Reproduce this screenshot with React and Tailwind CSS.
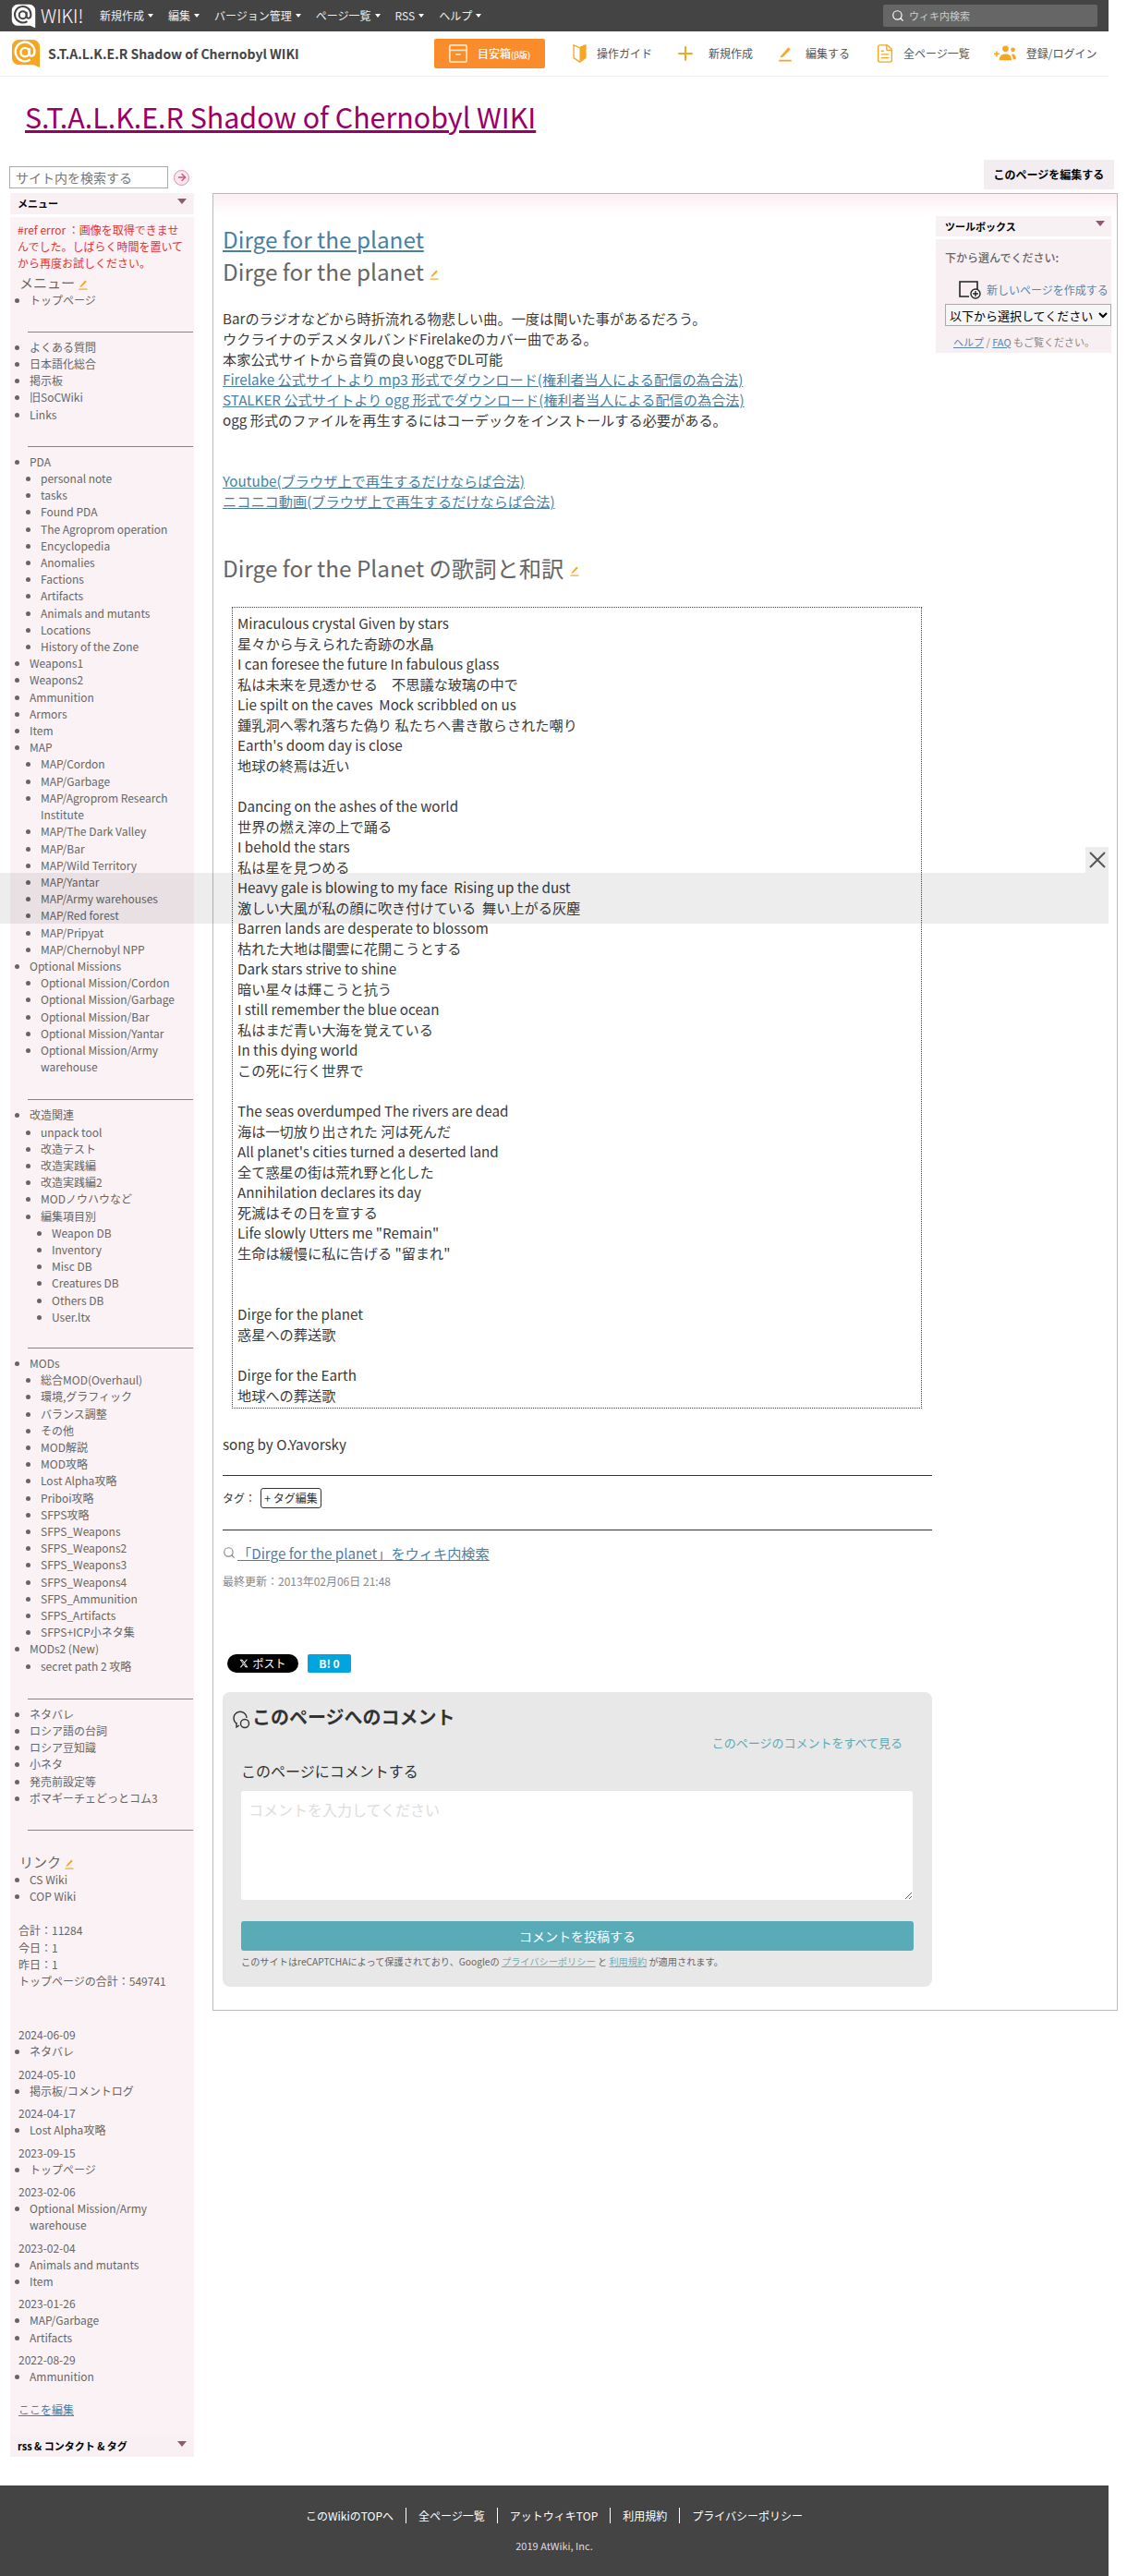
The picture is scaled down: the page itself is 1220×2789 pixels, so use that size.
import { Search, Plus, FileText, ArrowRight } from 'lucide-react';

const font = 'font-["Noto_Sans_CJK_JP","Noto_Sans",sans-serif]';

// ── Icons ─────────────────────────────────────────────────────────────────────
function AtLogo({ bg, fg, className }) {
  return (
    <svg viewBox="0 0 34 34" className={className}>
      <path d="M9 1h16a8 8 0 0 1 8 8v24l-7-3H9a8 8 0 0 1-8-8V9a8 8 0 0 1 8-8z" fill={bg} />
      <circle cx="16" cy="15.5" r="5" fill="none" stroke={fg} strokeWidth="2.5" />
      <path d="M21 11v6c0 4 6 4 6-2a11 11 0 1 0-5 9" fill="none" stroke={fg} strokeWidth="2.5" />
    </svg>
  );
}

function Pencil({ className = 'w-3 h-3' }) {
  return (
    <svg viewBox="0 0 16 16" className={`inline-block ${className}`}>
      <path d="M4 10 11 2l2 2-7 7-3 1z" fill="#f5a623" />
      <rect x="2" y="14" width="12" height="1.6" fill="#f5a623" />
    </svg>
  );
}

function Triangle({ className = '' }) {
  return <span className={`block w-0 h-0 border-x-[5px] border-x-transparent border-t-[6px] border-t-[#8c5a73] ${className}`} />;
}

// ── Sidebar ───────────────────────────────────────────────────────────────────
function Item({ children, sub }) {
  return (
    <li className="list-disc">
      <span>{children}</span>
      {sub && <List items={sub} nested />}
    </li>
  );
}

function List({ items, nested }) {
  return (
    <ul className={nested ? 'pl-[12px]' : 'pl-[21px]'}>
      {items.map((it) =>
        Array.isArray(it) ? (
          <Item key={it[0]} sub={it[1]}>{it[0]}</Item>
        ) : (
          <Item key={it}>{it}</Item>
        )
      )}
    </ul>
  );
}

function SideRule({ className }) {
  return <hr className={`w-[179px] ml-[19px] border-t border-[#8a8085] ${className}`} />;
}

const pda = [
  ['PDA', ['personal note', 'tasks', 'Found PDA', 'The Agroprom operation', 'Encyclopedia', 'Anomalies', 'Factions', 'Artifacts', 'Animals and mutants', 'Locations', 'History of the Zone']],
  'Weapons1', 'Weapons2', 'Ammunition', 'Armors', 'Item',
  ['MAP', ['MAP/Cordon', 'MAP/Garbage', 'MAP/Agroprom Research Institute', 'MAP/The Dark Valley', 'MAP/Bar', 'MAP/Wild Territory', 'MAP/Yantar', 'MAP/Army warehouses', 'MAP/Red forest', 'MAP/Pripyat', 'MAP/Chernobyl NPP']],
  ['Optional Missions', ['Optional Mission/Cordon', 'Optional Mission/Garbage', 'Optional Mission/Bar', 'Optional Mission/Yantar', 'Optional Mission/Army warehouse']],
];

const mods = [
  ['改造関連', ['unpack tool', '改造テスト', '改造実践編', '改造実践編2', 'MODノウハウなど', ['編集項目別', ['Weapon DB', 'Inventory', 'Misc DB', 'Creatures DB', 'Others DB', 'User.ltx']]]],
];

const mods2 = [
  ['MODs', ['総合MOD(Overhaul)', '環境,グラフィック', 'バランス調整', 'その他', 'MOD解説', 'MOD攻略', 'Lost Alpha攻略', 'Priboi攻略', 'SFPS攻略', 'SFPS_Weapons', 'SFPS_Weapons2', 'SFPS_Weapons3', 'SFPS_Weapons4', 'SFPS_Ammunition', 'SFPS_Artifacts', 'SFPS+ICP小ネタ集']],
  ['MODs2 (New)', ['secret path 2 攻略']],
];

const recent = [
  ['2024-06-09', ['ネタバレ']],
  ['2024-05-10', ['掲示板/コメントログ']],
  ['2024-04-17', ['Lost Alpha攻略']],
  ['2023-09-15', ['トップページ']],
  ['2023-02-06', ['Optional Mission/Army warehouse']],
  ['2023-02-04', ['Animals and mutants', 'Item']],
  ['2023-01-26', ['MAP/Garbage', 'Artifacts']],
  ['2022-08-29', ['Ammunition']],
];

function Sidebar() {
  return (
    <aside className="w-[199px] ml-[11px] text-[12px] leading-[18.2px] text-[#666]">
      <div className="flex items-center gap-[6px] h-[24px] -ml-px mb-[5px]">
        <input
          readOnly
          placeholder="サイト内を検索する"
          className="w-[172px] h-[24px] border border-[#aaa] px-[6px] text-[14px] placeholder:text-[#777]"
        />
        <div className="w-[17px] h-[17px] rounded-full border border-[#e58aa5] bg-[#fbe9ef] flex items-center justify-center">
          <ArrowRight size={12} strokeWidth={3} className="text-[#d9537f]" />
        </div>
      </div>
      <div className="h-[23px] bg-[#f9f0f3] flex items-center justify-between px-[8px] text-[11px] font-bold text-black">
        <span>メニュー</span>
        <Triangle className="-mt-[6px]" />
      </div>
      <div className="mt-[3px] bg-[#fbf2f5] pt-[5px] h-[2402px]">
        <p className="px-[8px] text-[#e53333]">#ref error ：画像を取得できませんでした。しばらく時間を置いてから再度お試しください。</p>
        <p className="pl-[10px] mt-[1px] text-[15px] leading-[20px]">メニュー <Pencil /></p>
        <List items={['トップページ']} />
        <SideRule className="mt-[25px] mb-[7px]" />
        <List items={['よくある質問', '日本語化総合', '掲示板', '旧SoCWiki', 'Links']} />
        <SideRule className="mt-[25px] mb-[7px]" />
        <List items={pda} />
        <SideRule className="mt-[26px] mb-[7px]" />
        <List items={mods} />
        <SideRule className="mt-[24px] mb-[7px]" />
        <List items={mods2} />
        <SideRule className="mt-[26px] mb-[7px]" />
        <List items={['ネタバレ', 'ロシア語の台詞', 'ロシア豆知識', '小ネタ', '発売前設定等', 'ポマギーチェどっとコム3']} />
        <SideRule className="mt-[25px] mb-[24px]" />
        <p className="pl-[10px] text-[15px] leading-[20px]">リンク <Pencil /></p>
        <List items={['CS Wiki', 'COP Wiki']} />
        <div className="pl-[9px] mt-[19px]">
          <p>合計：11284</p>
          <p>今日：1</p>
          <p>昨日：1</p>
          <p>トップページの合計：549741</p>
        </div>
        <div className="mt-[40px]">
          {recent.map(([date, pages]) => (
            <div key={date} className="mb-[6px]">
              <p className="pl-[9px]">{date}</p>
              <List items={pages} />
            </div>
          ))}
        </div>
        <p className="pl-[9px] mt-[18px] text-[#4a7fa5] underline">ここを編集</p>
      </div>
      <div className="h-[23px] bg-[#f9f0f3] flex items-center justify-between px-[8px] text-[11px] font-bold text-black">
        <span>rss &amp; コンタクト &amp; タグ</span>
        <Triangle className="-mt-[6px]" />
      </div>
    </aside>
  );
}

// ── Toolbox ───────────────────────────────────────────────────────────────────
function Toolbox() {
  return (
    <div className="absolute right-[6px] top-[24px] w-[190px] text-[12px] text-[#666]">
      <div className="h-[22px] bg-[#f8f1f4] flex items-center justify-between pl-[10px] pr-[7px] text-[11px] font-bold text-black">
        <span>ツールボックス</span>
        <Triangle className="-mt-[6px]" />
      </div>
      <div className="mt-[3px] h-[123px] bg-[#f8eff3] pt-[11px] pl-[10px]">
        <p className="font-medium leading-[18px]">下から選んでください:</p>
        <p className="mt-[16px] ml-[15px] h-[20px] flex items-center gap-[6px] text-[#5c86a8] whitespace-nowrap">
          <svg viewBox="0 0 24 20" className="w-[24px] h-[20px] shrink-0">
            <path d="M20 11V1H1v16h10" fill="none" stroke="#222" strokeWidth="1.6" />
            <circle cx="18" cy="14" r="5" fill="#fff" stroke="#222" strokeWidth="1.4" />
            <path d="M18 11v6M15 14h6" stroke="#222" strokeWidth="1.4" />
          </svg>
          新しいページを作成する
        </p>
        <select className="block mt-[5px] w-[180px] h-[24px] border border-[#aaa] bg-[#f6f6f6] text-[13px] text-black">
          <option>以下から選択してください</option>
        </select>
        <p className="mt-[8px] ml-[9px] text-[11px] leading-[18px] text-[#888]">
          <span className="text-[#5c86a8] underline">ヘルプ</span> / <span className="text-[#5c86a8] underline">FAQ</span> もご覧ください。
        </p>
      </div>
    </div>
  );
}

// ── Main ──────────────────────────────────────────────────────────────────────
const lyrics = `Miraculous crystal Given by stars
星々から与えられた奇跡の水晶
I can foresee the future In fabulous glass
私は未来を見透かせる　不思議な玻璃の中で
Lie spilt on the caves  Mock scribbled on us
鍾乳洞へ零れ落ちた偽り 私たちへ書き散らされた嘲り
Earth's doom day is close
地球の終焉は近い

Dancing on the ashes of the world
世界の燃え滓の上で踊る
I behold the stars
私は星を見つめる
Heavy gale is blowing to my face  Rising up the dust
激しい大風が私の顔に吹き付けている  舞い上がる灰塵
Barren lands are desperate to blossom
枯れた大地は闇雲に花開こうとする
Dark stars strive to shine
暗い星々は輝こうと抗う
I still remember the blue ocean
私はまだ青い大海を覚えている
In this dying world
この死に行く世界で

The seas overdumped The rivers are dead
海は一切放り出された 河は死んだ
All planet's cities turned a deserted land
全て惑星の街は荒れ野と化した
Annihilation declares its day
死滅はその日を宣する
Life slowly Utters me "Remain"
生命は緩慢に私に告げる "留まれ"


Dirge for the planet
惑星への葬送歌

Dirge for the Earth
地球への葬送歌`.split('\n');

function Article() {
  return (
    <div className="text-[15.2px] leading-[22px] text-[#3a3a3a]">
      <p className="pt-[31px] text-[24.32px] leading-[35px] text-[#4a7fa5] underline">Dirge for the planet</p>
      <h2 className="text-[24.32px] leading-[35px] text-[#666]">Dirge for the planet <Pencil /></h2>
      <div className="mt-[22px]">
        <p>Barのラジオなどから時折流れる物悲しい曲。一度は聞いた事があるだろう。</p>
        <p>ウクライナのデスメタルバンドFirelakeのカバー曲である。</p>
        <p>本家公式サイトから音質の良いoggでDL可能</p>
        <p className="text-[#4a7fa5] underline">Firelake 公式サイトより mp3 形式でダウンロード(権利者当人による配信の為合法)</p>
        <p className="text-[#4a7fa5] underline">STALKER 公式サイトより ogg 形式でダウンロード(権利者当人による配信の為合法)</p>
        <p>ogg 形式のファイルを再生するにはコーデックをインストールする必要がある。</p>
      </div>
      <div className="mt-[44px] text-[#4a7fa5] underline">
        <p>Youtube(ブラウザ上で再生するだけならば合法)</p>
        <p>ニコニコ動画(ブラウザ上で再生するだけならば合法)</p>
      </div>
      <h3 className="mt-[44px] text-[24.32px] leading-[36px] text-[#666]">Dirge for the Planet の歌詞と和訳 <Pencil /></h3>
      <div className="mt-[24px] ml-[10px] w-[747px] h-[868px] border border-dotted border-[#5a3a3a] px-[5px] py-[5px] overflow-hidden">
        {lyrics.map((line, i) => (
          <p key={i} className="whitespace-pre h-[22px]">{line}</p>
        ))}
      </div>
      <p className="mt-[27px]">song by O.Yavorsky</p>
      <hr className="mt-[23px] w-[768px] border-t border-[#333]" />
      <div className="mt-[13px] flex items-center text-[12px] h-[22px]">
        タグ：
        <span className="ml-[5px] h-[22px] w-[66px] border border-[#333] rounded-[3px] flex items-center justify-center text-[#333]">+ タグ編集</span>
      </div>
      <hr className="mt-[23px] w-[768px] border-t border-[#333]" />
      <p className="mt-[13px] flex items-center">
        <Search size={14} className="text-[#888] mr-[2px]" />
        <span className="text-[#4a7fa5] underline">「Dirge for the planet」をウィキ内検索</span>
      </p>
      <p className="mt-[9px] text-[12px] text-[#888]">最終更新：2013年02月06日 21:48</p>
      <div className="mt-[68px] ml-[5px] flex gap-[10px]">
        <span className="w-[77px] h-[20px] rounded-full bg-black text-white text-[12px] leading-[20px] flex items-center justify-center gap-1">
          <svg viewBox="0 0 24 24" className="w-[10px] h-[10px]"><path d="M18.2 2h3.3l-7.2 8.3L22.8 22h-6.6l-5.2-6.8L5 22H1.700l7.700-8.800L1.300 2h6.800l4.700 6.200zM17 20h1.800L7 3.900H5z" fill="#fff" /></svg>
          ポスト
        </span>
        <span className="w-[47px] h-[20px] rounded-[2px] bg-[#00a4de] text-white text-[12px] font-bold flex items-center justify-center">B! 0</span>
      </div>
      <section className="mt-[21px] w-[768px] h-[319px] rounded-[8px] bg-[#e8e8e8] px-[20px]">
        <h4 className="pt-[13px] -ml-[9px] flex items-center gap-px text-[20px] leading-[28px] font-bold text-[#333]">
          <svg viewBox="0 0 20 20" className="w-[20px] h-[20px] mt-[6px]">
            <path d="M4 14a7 7 0 1 1 11-6" fill="none" stroke="#333" strokeWidth="1.4" />
            <path d="M4 13v5l3-2" fill="none" stroke="#333" strokeWidth="1.4" />
            <circle cx="13" cy="14" r="4.500" fill="none" stroke="#333" strokeWidth="1.400" />
          </svg>
          このページへのコメント
        </h4>
        <p className="mt-[3px] pr-[12px] text-right text-[13px] leading-[22px] text-[#5aabb8]">このページのコメントをすべて見る</p>
        <p className="mt-[7px] text-[16px] leading-[24px] text-[#333]">このページにコメントする</p>
        <textarea
          readOnly
          placeholder="コメントを入力してください"
          className="block mt-[10px] w-[727px] h-[118px] rounded-[3px] bg-white px-[8px] py-[8px] text-[16px] leading-[24px] placeholder:text-[#ddd]"
        />
        <div className="mt-[23px] h-[32px] rounded-[3px] bg-[#5aabb8] text-white text-[14px] leading-[32px] text-center">コメントを投稿する</div>
        <p className="mt-[2px] text-[10.2px] leading-[20px] text-[#666]">
          このサイトはreCAPTCHAによって保護されており、Googleの <span className="text-[#6fb0b8] underline">プライバシーポリシー</span> と <span className="text-[#6fb0b8] underline">利用規約</span> が適用されます。
        </p>
      </section>
    </div>
  );
}

// ── Header ────────────────────────────────────────────────────────────────────
const topMenu = ['新規作成', '編集', 'バージョン管理', 'ページ一覧', 'RSS', 'ヘルプ'];

function TopBar() {
  return (
    <div className="h-[34px] bg-[#444] flex items-center justify-between pl-[12px] pr-[12px] text-white">
      <div className="flex items-center">
        <AtLogo bg="#fff" fg="#444" className="w-[27px] h-[27px]" />
        <span className="ml-[5px] w-[44px] text-[20px] leading-none font-light whitespace-nowrap">WIKI!</span>
        <div className="ml-[20px] flex gap-[16px] text-[12px] text-[#eee]">
          {topMenu.map((m) => (
            <span key={m} className="flex items-center gap-[4px]">
              {m}
              <span className="w-0 h-0 border-x-[3px] border-x-transparent border-t-[4px] border-t-white" />
            </span>
          ))}
        </div>
      </div>
      <div className="w-[232px] h-[24px] rounded-[2px] bg-[#666] flex items-center pl-[9px] gap-[5px] text-[11px] text-[#ccc]">
        <Search size={14} className="text-white" />
        ウィキ内検索
      </div>
    </div>
  );
}

function SubBar() {
  return (
    <div className="h-[49px] border-b border-[#eee] flex items-center pl-[12px] text-[#555]">
      <AtLogo bg="#f5a623" fg="#fff" className="w-[32px] h-[32px]" />
      <b className="ml-[8px] text-[14px] w-[418px] whitespace-nowrap text-[#444]">S.T.A.L.K.E.R Shadow of Chernobyl WIKI</b>
      <div className="w-[120px] h-[32px] -mt-[1px] rounded-[2px] bg-[#fb8c2b] flex items-center pl-[15px] gap-[10px] text-white text-[12px] font-medium">
        <svg viewBox="0 0 24 24" className="w-[22px] h-[22px]" fill="none" stroke="#ffe2b8" strokeWidth="2">
          <rect x="2" y="2" width="20" height="20" rx="2" />
          <path d="M2 8h20M9 13h6" />
        </svg>
        <span>目安箱<span className="text-[9px]">(β版)</span></span>
      </div>
      <div className="ml-[30px] flex items-center text-[12px] whitespace-nowrap">
        <svg viewBox="0 0 16 24" className="w-[15px] h-[22px]"><path d="M1 2l7 3 7-3v15l-7 5-7-5z" fill="#fff" stroke="#f5a623" strokeWidth="1.500" /><path d="M8 5l7-3v15l-7 5z" fill="#f5a623" /></svg>
        <span className="ml-[11px]">操作ガイド</span>
        <Plus size={24} className="ml-[24px] text-[#f5a623]" strokeWidth={2} />
        <span className="ml-[13px]">新規作成</span>
        <Pencil className="w-[18px] h-[18px] ml-[26px]" />
        <span className="ml-[13px]">編集する</span>
        <FileText size={22} className="ml-[27px] text-[#f5a623]" strokeWidth={1.5} />
        <span className="ml-[9px]">全ページ一覧</span>
        <svg viewBox="0 0 26 20" className="w-[25px] h-[19px] ml-[25px]" fill="#f5a623">
          <path d="M1 9h6v1.600H1zM3.200 6.800h1.600v6H3.200z" />
          <circle cx="14" cy="4" r="3.500" />
          <circle cx="22.500" cy="5" r="2.500" />
          <path d="M7 17c0-5 3-7 7-7s7 2 7 7zM22 10c2.500 0 4 2 4 6h-3.500c0-2-.5-4-1.500-5z" />
        </svg>
        <span className="ml-[11px]">登録/ログイン</span>
      </div>
    </div>
  );
}

// ── Footer ────────────────────────────────────────────────────────────────────
const footLinks = ['このWikiのTOPへ', '全ページ一覧', 'アットウィキTOP', '利用規約', 'プライバシーポリシー'];

function Footer() {
  return (
    <footer className="mt-[31px] w-[1200px] h-[98px] bg-[#444] text-white text-[12px] flex flex-col items-center pt-[24px]">
      <div className="flex">
        {footLinks.map((l, i) => (
          <span key={l} className={`h-[17px] leading-[17px] px-[13px] ${i ? 'border-l border-white' : ''}`}>{l}</span>
        ))}
      </div>
      <p className="mt-[16px] text-[11px] text-[#ddd]">2019 AtWiki, Inc.</p>
    </footer>
  );
}

export default function App() {
  return (
    <div className={`relative w-[1220px] h-[2789px] overflow-hidden bg-white ${font}`}>
      <div className="w-[1200px]">
        <TopBar />
        <SubBar />
        <h1 className="pl-[27px] pt-[20px] text-[30.4px] leading-[46px] text-[#990066] underline whitespace-nowrap">S.T.A.L.K.E.R Shadow of Chernobyl WIKI</h1>
      </div>
      <div className="mt-[31px] flex items-start">
        <Sidebar />
        <div className="ml-[20px] w-[980px]">
          <div className="flex justify-end h-[29px] pr-[4px]">
            <span className="w-[141px] h-[32px] -mt-[7px] bg-[#f3ecf0] text-black font-bold text-[12px] leading-[32px] text-center">このページを編集する</span>
          </div>
          <main className="relative h-[1968px] border border-[#bbb] px-[10px] bg-gradient-to-b from-[#fbeef2] to-white to-[1.2%]">
            <Toolbox />
            <Article />
          </main>
        </div>
      </div>
      <Footer />
      <div className="absolute left-0 top-[945px] w-[1200px] h-[55px] bg-black/[0.07]" />
      <div className="absolute left-[1175px] top-[917px] w-[25px] h-[28px] bg-black/[0.07] flex items-center justify-center">
        <svg viewBox="0 0 18 18" className="w-[18px] h-[18px]" stroke="#555" strokeWidth="2"><path d="M1 1l16 16M17 1 1 17" /></svg>
      </div>
    </div>
  );
}
